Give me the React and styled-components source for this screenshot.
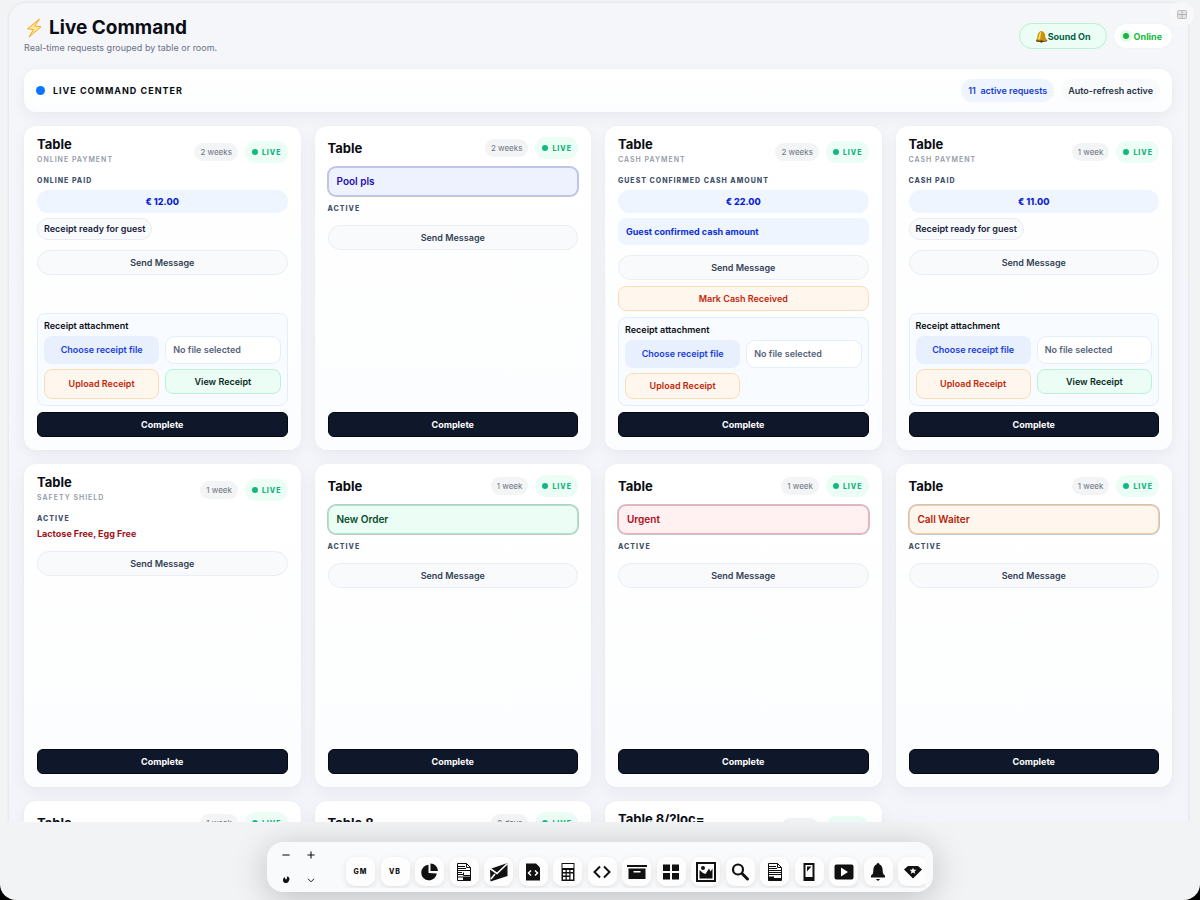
import React from "react";
import styled, { createGlobalStyle, css } from "styled-components";

const GlobalStyle = createGlobalStyle`
  *, *::before, *::after { box-sizing: border-box; }
  html, body, #root { height: 100%; }
  body { margin: 0; background: #000; font-family: Inter, "Liberation Sans", sans-serif; color: #0b0d14; overflow: hidden; }
  button, input { font: inherit; color: inherit; }
  h1, h2, p { margin: 0; }
`;

const Shell = styled.div`
  position: relative;
  height: 100%;
  display: flex;
  flex-direction: column;
  background: #f2f3f5;
  border-radius: 0 0 16px 16px;
  overflow: hidden;
`;

const Workspace = styled.div`
  flex: 1;
  min-height: 0;
  overflow: hidden;
  padding: 2px 11px 0 8px;
`;

const Panel = styled.main`
  padding: 15px 16px 40px 15px;
  background: linear-gradient(180deg, #f5f6fa 0, #f3f4fa 100%);
  border: 1px solid #e9eaef;
  border-radius: 18px;
  box-shadow: 0 0 0 1px #eeeff2;
`;

const Header = styled.header`
  display: flex;
  justify-content: space-between;
  align-items: center;
  height: 36px;
  margin-bottom: 15px;
`;

const Title = styled.h1`
  display: flex;
  align-items: center;
  gap: 5px;
  font-size: 19px;
  line-height: 22px;
  font-weight: 700;
`;

const Subtitle = styled.p`
  margin-top: 2px;
  font-size: 9px;
  line-height: 14px;
  color: #6b7280;
`;

const Row = styled.div`
  display: flex;
  align-items: center;
  gap: ${(p) => p.$gap || 7}px;
`;

const SoundButton = styled.button`
  display: flex;
  align-items: center;
  height: 26px;
  padding: 0 15px;
  border: 1px solid #b5f3d2;
  border-radius: 13px;
  background: #ecfdf5;
  color: #065f46;
  font-size: 9px;
  font-weight: 700;
`;

const Online = styled.span`
  display: flex;
  align-items: center;
  gap: 5px;
  height: 24px;
  padding: 0 10px 0 9px;
  border-radius: 12px;
  background: #fff;
  box-shadow: 0 0 1px #c6e9d3;
  color: #12b93b;
  font-size: 9px;
  font-weight: 700;
`;

const Dot = styled.i`
  width: ${(p) => p.$size || 6}px;
  height: ${(p) => p.$size || 6}px;
  border-radius: 50%;
  background: ${(p) => p.$color || "#10b981"};
  box-shadow: ${(p) => (p.$halo ? "0 0 0 3px #e3f9ea" : "none")};
`;

const surface = css`
  background: linear-gradient(180deg, #fff, #fcfdfe);
  box-shadow: 0 0 1px rgba(15, 23, 42, 0.1), 0 5px 16px rgba(15, 23, 42, 0.05);
`;

const Bar = styled.section`
  ${surface}
  display: flex;
  align-items: center;
  justify-content: space-between;
  height: 43px;
  padding: 0 12px;
  border-radius: 12px;
  margin-bottom: 14px;
`;

const BarTitle = styled.h2`
  font-size: 9px;
  font-weight: 700;
  letter-spacing: 1px;
`;

const BarPill = styled.span`
  height: 23px;
  padding: 0 7px;
  border-radius: 12px;
  font-size: 9px;
  line-height: 23px;
  font-weight: 600;
  white-space: pre;
  background: ${(p) => (p.$blue ? "#eef5ff" : "#f8fafc")};
  color: ${(p) => (p.$blue ? "#1740cf" : "#273449")};
`;

const Grid = styled.div`
  display: grid;
  grid-template-columns: repeat(4, minmax(0, 1fr));
  grid-auto-rows: minmax(323px, auto);
  gap: 14px;
`;

const Card = styled.article`
  ${surface}
  display: flex;
  flex-direction: column;
  padding: 11px 13px 13px;
  border-radius: 12px;
`;

const CardHead = styled.header`
  display: flex;
  align-items: center;
  justify-content: space-between;
  margin-bottom: 8px;
`;

const CardTitle = styled.h2`
  font-size: 13px;
  line-height: 15px;
  font-weight: 700;
`;

const Kind = styled.p`
  margin-top: 1px;
  font-size: 7px;
  line-height: 14px;
  font-weight: 600;
  letter-spacing: 1px;
  color: #949aa8;
`;

const Age = styled.time`
  height: 18px;
  padding: 0 6px;
  border-radius: 9px;
  background: #f3f4f6;
  color: #6b7280;
  font-size: 8px;
  line-height: 18px;
`;

const Live = styled.span`
  display: flex;
  align-items: center;
  gap: 4px;
  height: 22px;
  padding: 0 6px 0 7px;
  border-radius: 11px;
  background: #ecfdf5;
  color: #0fb37c;
  font-size: 7px;
  font-weight: 800;
  letter-spacing: 1px;
`;

const Status = styled.p`
  font-size: 7px;
  line-height: 12px;
  font-weight: 800;
  letter-spacing: 1px;
  color: #44536b;
`;

const Amount = styled.p`
  margin-top: 3px;
  height: 23px;
  border-radius: 12px;
  background: #eef5ff;
  color: #0b1fd0;
  text-align: center;
  font-size: 9px;
  line-height: 23px;
  font-weight: 800;
`;

const Chip = styled.p`
  align-self: flex-start;
  margin-top: 5px;
  height: 22px;
  padding: 0 6px;
  border: 1px solid #e9ecf2;
  border-radius: 11px;
  background: #f8fafc;
  font-size: 9px;
  line-height: 20px;
  font-weight: 600;
  color: #16203a;
`;

const Confirmation = styled.p`
  margin-top: 5px;
  height: 27px;
  padding: 0 8px;
  border-radius: 8px;
  background: #eef5ff;
  color: #0f2fd6;
  font-size: 9px;
  line-height: 27px;
  font-weight: 700;
`;

const Allergens = styled.p`
  margin-top: 2px;
  font-size: 9px;
  line-height: 14px;
  font-weight: 700;
  color: #a01216;
`;

const alertTones = {
  indigo: ["#eef2ff", "#bcc5f8", "#1e0fb4"],
  green: ["#ecfdf5", "#a2ecc8", "#064e2b"],
  red: ["#fff0f2", "#f6abb6", "#b00b1a"],
  orange: ["#fff7ed", "#fbcb98", "#b91c0c"],
};

const Alert = styled.p`
  height: 29px;
  padding: 0 8px;
  margin-bottom: 7px;
  border: 1px solid ${(p) => alertTones[p.$tone][1]};
  border-radius: 8px;
  box-shadow: 0 0 0 1px rgba(60, 66, 90, 0.3);
  background: ${(p) => alertTones[p.$tone][0]};
  color: ${(p) => alertTones[p.$tone][2]};
  font-size: 10px;
  line-height: 27px;
  font-weight: 600;
`;

const buttonTones = {
  plain: ["#f9fafc", "#eaedf3", "#334155"],
  orange: ["#fff7ed", "#fcdcb6", "#c2260c"],
  green: ["#ecfdf5", "#b9f2d6", "#0b2b22"],
  dark: ["#0f172a", "#05070d", "#fff"],
};

const Button = styled.button`
  width: 100%;
  height: ${(p) => p.$height || 25}px;
  padding: 0;
  border: 1px solid ${(p) => buttonTones[p.$tone][1]};
  border-radius: ${(p) => (p.$round ? 13 : p.$tone === "dark" ? 6 : 8)}px;
  background: ${(p) => buttonTones[p.$tone][0]};
  color: ${(p) => buttonTones[p.$tone][2]};
  font-size: 9px;
  line-height: 10px;
  font-weight: ${(p) => (p.$tone === "dark" ? 700 : 600)};
`;

const Actions = styled.div`
  flex: 1;
  display: flex;
  flex-direction: column;
  gap: 6px;
  margin-top: 10px;
`;

const Footer = styled.div`
  display: flex;
  flex-direction: column;
  gap: 6px;
  margin-top: auto;
`;

const Attachment = styled.section`
  display: grid;
  grid-template-columns: 1fr 1fr;
  align-items: start;
  column-gap: 6px;
  row-gap: 5px;
  padding: 6px;
  border: 1px solid #e3eefd;
  border-radius: 8px;
  background: #f8fbff;
`;

const AttachmentTitle = styled.p`
  grid-column: 1 / -1;
  font-size: 9px;
  line-height: 11px;
  font-weight: 600;
`;

const Choose = styled.label`
  height: 28px;
  border-radius: 8px;
  background: #e8f0fe;
  color: #1a3fd8;
  text-align: center;
  font-size: 9px;
  line-height: 28px;
  font-weight: 600;
  input { display: none; }
`;

const FileName = styled.output`
  height: 28px;
  padding: 0 7px;
  border: 1px solid #e3eefd;
  border-radius: 9px;
  background: #fff;
  color: #56647a;
  font-size: 9px;
  line-height: 26px;
  font-weight: 600;
`;

const DockArea = styled.footer`
  display: flex;
  justify-content: center;
  padding: 20px 0 8px;
`;

const Dock = styled.nav`
  display: flex;
  width: 666px;
  height: 50px;
  padding: 0 8px 4px 6px;
  border-radius: 16px;
  background: #f9fafc;
  box-shadow: 0 6px 34px rgba(0, 0, 0, 0.22);
`;

const ZoomPad = styled.div`
  display: grid;
  grid-template-columns: 25px 25px;
  grid-template-rows: 25px 25px;
  margin-right: 16px;
`;

const PadButton = styled.button`
  display: grid;
  place-items: center;
  padding: 0;
  border: 0;
  background: none;
`;

const Scroller = styled.div`
  flex: 1;
  min-width: 0;
  overflow: hidden;
  padding: 15px 0 0 7px;
`;

const Tiles = styled.div`
  display: flex;
  justify-content: space-between;
  width: 581px;
`;

const Tile = styled.button`
  display: grid;
  place-items: center;
  width: 29px;
  height: 29px;
  padding: 0;
  border: 0;
  border-radius: 9px;
  background: #fdfdfe;
  box-shadow: 0 2px 6px rgba(0, 0, 0, 0.1);
  font-size: 7px;
  font-weight: 800;
  letter-spacing: 1px;
  color: #111;
`;

const CornerButton = styled.button`
  position: absolute;
  top: 2px;
  right: 6px;
  display: grid;
  place-items: center;
  width: 25px;
  height: 25px;
  padding: 0;
  border: 0;
  border-radius: 50%;
  background: #f8f8fa;
`;

function Icon({ children, size = 20 }) {
  return (
    <svg width={size} height={size} viewBox="0 0 20 20" fill="#111" aria-hidden="true">
      {children}
    </svg>
  );
}

const line = { fill: "none", stroke: "#111" };

const dockItems = [
  ["Pie chart", <><path d="M8.500 2.800A7.800 7.800 0 1 0 16.800 11.500L8.500 11Z" /><path d="M10.500 1.500V9H18A7.500 7.500 0 0 0 10.500 1.500Z" /></>],
  ["Invoice", <><path {...line} d="M3.500 1.500h9l4 4v13h-13Z" /><path {...line} d="M12.500 1.500v4h4M4 4.500h7M4 6.500h8M4 8.500h12M4 10.500h4M9.500 10.500v3h7M4 12.500h5" /><path d="M4 14.500h12v1H4zM9 15.500h7V18H9z" /></>],
  ["Mail", <><path d="M1 7 18.500 1v13L1.500 19.500Z" /><path {...line} stroke="#fff" strokeWidth="1.600" d="m1 6.500 7 5L18.500 1.500M2 17l4-5" /></>],
  ["Code file", <><path d="M3 1.500h10l4 4v13H3Z" /><path fill="none" stroke="#fff" strokeWidth="1.500" d="M8 8.500 5.500 11 8 13.500M12 8.500l2.500 2.500L12 13.500" /></>],
  ["Calculator", <><path d="M3.500 1h13v18h-13z" /><path fill="#fff" d="M4.500 2h11v4h-11zM5 8h2.500v2H5zM8.800 8h2.500v2H8.800zM12.500 8H15v2h-2.500zM5 11.500h2.500v2H5zM8.800 11.500h2.500v2H8.800zM12.500 11.500H15V17.500h-2.500zM5 15h2.500v2.500H5zM8.800 15h2.500v2.500H8.800z" /></>],
  ["Code", <path {...line} strokeWidth="2" d="M8 4.500 2.500 10 8 15.500M12 4.500l5.500 5.500-5.500 5.500" />],
  ["Archive", <><path d="M0 3h20v2H0zM1.500 6.500h17V17h-17z" /><path fill="#fff" d="M6.500 9h7v1.500h-7z" /></>],
  ["Grid", <path d="M2 2.500h7v6.500H2zM11 2.500h7v6.500h-7zM2 11h7v6.500H2zM11 11h7v6.500h-7z" />],
  ["Image", <><path {...line} strokeWidth="2" d="M1 1h18v18H1z" /><path d="M3.500 16.500V8L7 11l2.500 1L13 6.500l1.500 3 2-3v10z" /><circle cx="7" cy="6" r="2" /></>],
  ["Search", <><circle cx="8" cy="7.500" r="5" {...line} strokeWidth="2.200" /><path {...line} strokeWidth="3" strokeLinecap="round" d="m12.500 12 5 5" /></>],
  ["Document", <><path {...line} d="M3.500 1.500h9l4 4v13h-13Z" /><path {...line} d="M12.500 1.500v4h4M4 4.500h7M4 6.500h8M4 8.500h12M4 10.500h12M4 12.500h12" /><path d="M3.500 14.500H9V16h7v3H3.500z" /></>],
  ["Phone", <><path d="M4.500 1h11v18h-11z" /><path fill="#fff" d="M6.500 3h7v12h-7z" /><path d="M8 4.500h4.500L8 9.500z" /></>],
  ["Video", <><rect x="0.500" y="2.500" width="19" height="15" rx="2" /><path fill="#fff" d="M7 5.500l7 4.500-7 4.500z" /></>],
  ["Alerts", <><path d="M10 1c1 0 1.500.8 1.500 1.500 2.200.8 3.200 3 3.200 6 0 2.500.5 4 2.300 5V15.500H3V13.500c1.800-1 2.300-2.500 2.300-5 0-3 1-5.200 3.200-6C8.500 1.800 9 1 10 1ZM7.800 17h4.400L10 19Z" /></>],
  ["Rewards", <><path d="M5 4h10l4 3.500L10 16.500 1 7.500Z" /><path fill="#fff" d="m10 5.800 1 2h2.500l-2 1.600.7 2.400L10 10.600l-2.200 1.200.7-2.400-2-1.600H9Z" /></>],
];

function Receipt({ viewable }) {
  return (
    <Attachment>
      <AttachmentTitle>Receipt attachment</AttachmentTitle>
      <Choose>
        Choose receipt file
        <input type="file" />
      </Choose>
      <FileName>No file selected</FileName>
      <Button $tone="orange" $height={viewable ? 30 : 26}>Upload Receipt</Button>
      {viewable && <Button $tone="green">View Receipt</Button>}
    </Attachment>
  );
}

const requests = [
  { title: "Table", kind: "ONLINE PAYMENT", age: "2 weeks", status: "ONLINE PAID", amount: "€ 12.00", chip: "Receipt ready for guest", receipt: "view" },
  { title: "Table", age: "2 weeks", alert: ["indigo", "Pool pls"], status: "ACTIVE" },
  { title: "Table", kind: "CASH PAYMENT", age: "2 weeks", status: "GUEST CONFIRMED CASH AMOUNT", amount: "€ 22.00", confirmation: "Guest confirmed cash amount", cash: true, receipt: "upload" },
  { title: "Table", kind: "CASH PAYMENT", age: "1 week", status: "CASH PAID", amount: "€ 11.00", chip: "Receipt ready for guest", receipt: "view" },
  { title: "Table", kind: "SAFETY SHIELD", age: "1 week", status: "ACTIVE", allergens: "Lactose Free, Egg Free" },
  { title: "Table", age: "1 week", alert: ["green", "New Order"], status: "ACTIVE" },
  { title: "Table", age: "1 week", alert: ["red", "Urgent"], status: "ACTIVE" },
  { title: "Table", age: "1 week", alert: ["orange", "Call Waiter"], status: "ACTIVE" },
  { title: "Table", age: "1 week", status: "ACTIVE" },
  { title: "Table 8", age: "2 days", status: "ACTIVE" },
  { title: "Table 8/?loc=", kind: "CASH PAYMENT", age: "1 week", status: "ACTIVE" },
];

function RequestCard({ r }) {
  return (
    <Card>
      <CardHead>
        <div>
          <CardTitle>{r.title}</CardTitle>
          {r.kind && <Kind>{r.kind}</Kind>}
        </div>
        <Row>
          <Age>{r.age}</Age>
          <Live><Dot />LIVE</Live>
        </Row>
      </CardHead>
      {r.alert && <Alert $tone={r.alert[0]}>{r.alert[1]}</Alert>}
      <Status>{r.status}</Status>
      {r.amount && <Amount>{r.amount}</Amount>}
      {r.chip && <Chip>{r.chip}</Chip>}
      {r.confirmation && <Confirmation>{r.confirmation}</Confirmation>}
      {r.allergens && <Allergens>{r.allergens}</Allergens>}
      <Actions>
        <Button $tone="plain" $round>Send Message</Button>
        {r.cash && <Button $tone="orange">Mark Cash Received</Button>}
        <Footer>
          {r.receipt && <Receipt viewable={r.receipt === "view"} />}
          <Button $tone="dark">Complete</Button>
        </Footer>
      </Actions>
    </Card>
  );
}

export default function App() {
  return (
    <>
      <GlobalStyle />
      <Shell>
        <Workspace>
          <Panel>
            <Header>
              <div>
                <Title>
                  <svg width="20" height="20" viewBox="0 0 20 20" aria-hidden="true">
                    <path d="M15.500 1 3.500 10.800l6 .8L5 19 17 8.800l-6.300-.9Z" fill="#ffe9a0" stroke="#f9a51c" strokeWidth="1" strokeLinejoin="round" />
                  </svg>
                  Live Command
                </Title>
                <Subtitle>Real-time requests grouped by table or room.</Subtitle>
              </div>
              <Row>
                <SoundButton>
                  <svg width="13" height="13" viewBox="0 0 13 13" aria-hidden="true">
                    <path d="M6 1c3 .2 4.300 2.500 4.200 5 0 1.800.8 3 2 4L2 11.500 1 10c1.200-1.200 1.300-2.300 1.500-4C2.800 3.400 4 1.500 6 1Z" fill="#c9920e" />
                    <path d="M5 2.500C3.800 4 4.200 7 3 9.500l2-.3C5.800 7 5.300 4.500 6.500 2Z" fill="#ffe36b" />
                    <path d="M1 10c4 .8 8 .6 11.200 0v1.200C9 12.300 4 12.400 1 11.200Z" fill="#7d5207" />
                    <circle cx="6.500" cy="11.500" r="1.200" fill="#5a3a04" />
                  </svg>
                  Sound On
                </SoundButton>
                <Online><Dot $color="#12b93b" $halo />Online</Online>
              </Row>
            </Header>
            <Bar>
              <Row $gap={8}>
                <Dot $size={9} $color="#0a74ff" />
                <BarTitle>LIVE COMMAND CENTER</BarTitle>
              </Row>
              <Row>
                <BarPill $blue>{"11  active requests"}</BarPill>
                <BarPill>Auto-refresh active</BarPill>
              </Row>
            </Bar>
            <Grid>
              {requests.map((r, i) => <RequestCard key={i} r={r} />)}
            </Grid>
          </Panel>
        </Workspace>
        <DockArea>
          <Dock aria-label="Dock">
            <ZoomPad>
              <PadButton aria-label="Zoom out"><Icon size={12}><path {...line} strokeWidth="1.800" d="M4 10h12" /></Icon></PadButton>
              <PadButton aria-label="Zoom in"><Icon size={12}><path {...line} strokeWidth="1.800" d="M4 10h12M10 4v12" /></Icon></PadButton>
              <PadButton aria-label="Appearance"><Icon size={12}><path d="M8 5.500A5 5 0 1 0 14.500 12L16 8.500 14.500 5 11.500 4v4.500L9.500 9Z" /></Icon></PadButton>
              <PadButton aria-label="Collapse"><Icon size={12}><path {...line} strokeWidth="1.600" d="m5 8 5 5 5-5" /></Icon></PadButton>
            </ZoomPad>
            <Scroller>
              <Tiles>
                <Tile>GM</Tile>
                <Tile>VB</Tile>
                {dockItems.map(([name, art]) => (
                  <Tile key={name} aria-label={name}><Icon>{art}</Icon></Tile>
                ))}
              </Tiles>
            </Scroller>
          </Dock>
        </DockArea>
        <CornerButton aria-label="Layout">
          <svg width="10" height="9" viewBox="0 0 10 9" aria-hidden="true">
            <rect x="0.500" y="0.500" width="9" height="8" rx="1" fill="#e3e3e5" stroke="#bdbdc0" />
            <path d="M5 1v7M1 4.500h8" stroke="#b4b4b8" />
          </svg>
        </CornerButton>
      </Shell>
    </>
  );
}
